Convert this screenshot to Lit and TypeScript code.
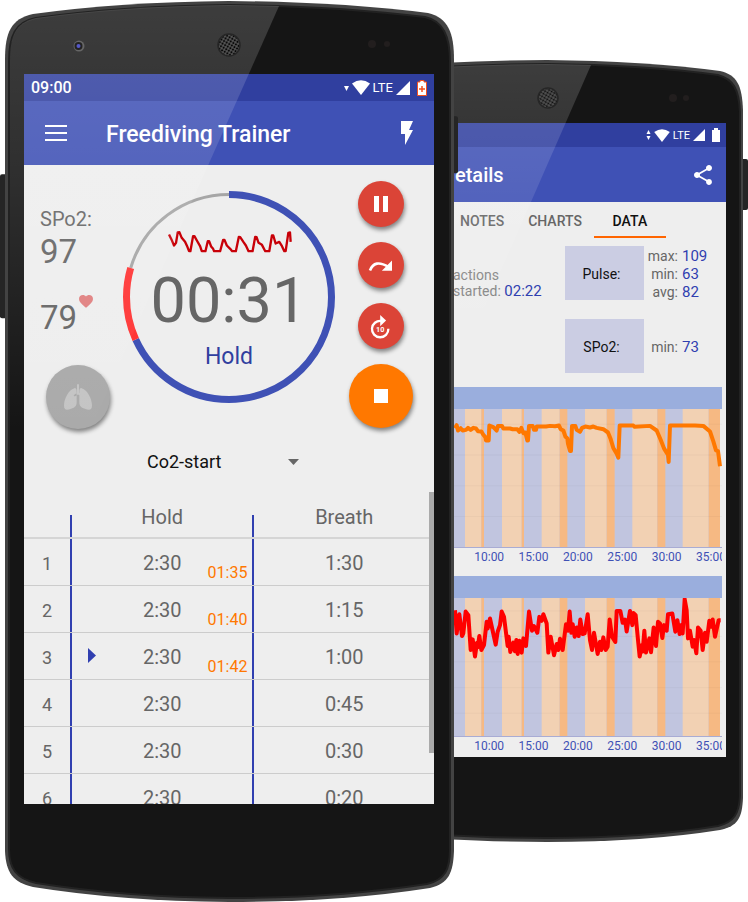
import { LitElement, html, svg, css } from "lit";
import { customElement, state } from "lit/decorators.js";

type Band = [start: number, end: number, kind: "hold" | "over"];

const BANDS: Band[] = [
  [75, 124, "hold"], [124, 132, "over"], [186, 245, "hold"], [245, 252, "over"],
  [305, 359, "hold"], [359, 382, "over"], [435, 500, "hold"], [500, 524, "over"],
  [577, 652, "hold"], [652, 676, "over"], [728, 806, "hold"], [806, 840, "over"],
];

const SPO2_LINE =
  "45,145 50,136 54,152 62,145 68,152 78,150 84,144 92,150 100,144 108,146 114,154 124,155 130,165 136,172 138,182 146,182 148,137 " +
  "160,142 170,152 174,138 186,138 190,146 210,146 218,148 232,148 238,156 244,144 250,160 256,158 262,182 264,182 267,138 278,138 282,150 " +
  "288,150 290,140 318,140 330,138 345,139 357,137 362,148 370,152 376,170 382,176 384,192 390,214 393,214 396,138 406,138 410,150 420,156 " +
  "426,144 436,140 450,143 460,140 470,144 490,148 504,158 512,178 520,205 530,222 535,234 539,137 580,137 584,141 630,138 650,152 " +
  "662,180 672,206 684,226 686,247 690,137 765,137 790,138 810,155 820,185 828,212 834,214 840,260";

const PULSE_LINE =
  "45,120 50,190 58,132 66,198 70,190 77,124 85,135 92,240 98,208 105,260 111,218 113,232 118,198 124,240 132,225 140,155 143,175 " +
  "150,145 158,182 167,224 173,185 180,165 185,124 192,140 203,228 206,200 211,246 220,218 225,244 229,210 233,252 238,212 245,248 " +
  "250,205 258,228 267,124 276,182 282,168 292,188 298,140 305,152 310,132 320,160 325,248 332,200 342,256 350,222 355,240 360,206 " +
  "368,240 378,162 384,182 389,124 394,188 398,162 404,200 410,172 416,198 421,148 428,192 434,190 443,132 450,210 456,240 462,188 " +
  "473,252 480,215 484,240 490,202 497,240 503,230 509,148 516,200 526,216 530,122 541,122 548,158 555,148 560,184 570,122 577,165 " +
  "580,128 587,135 594,210 599,260 606,225 608,245 613,182 618,248 628,205 633,247 641,172 648,228 654,155 660,160 667,204 672,165 " +
  "680,182 684,132 697,130 706,185 712,150 719,192 724,165 728,190 734,86 740,120 744,205 750,182 758,230 762,210 769,250 774,172 " +
  "782,182 788,240 795,188 800,215 808,152 814,170 818,148 825,200 836,150 842,150";

const CHARTS = [
  { name: "SPo2", cls: "spo2", top: 87, grid: [133, 226, 319, 412], line: SPO2_LINE },
  { name: "Pulse", cls: "pulse", top: 83, grid: [122, 199, 276, 354, 431], line: PULSE_LINE },
];

const TIMES = ["10:00", "15:00", "20:00", "25:00", "30:00", "35:00"];

const ROUNDS = [
  { hold: "2:30", mark: "01:35", breath: "1:30" },
  { hold: "2:30", mark: "01:40", breath: "1:15" },
  { hold: "2:30", mark: "01:42", breath: "1:00" },
  { hold: "2:30", mark: "", breath: "0:45" },
  { hold: "2:30", mark: "", breath: "0:30" },
  { hold: "2:30", mark: "", breath: "0:20" },
];

const wifi = html`<svg class="wifi" viewBox="0 0 18 15"><path d="M0 3.4Q9-3 18 3.4L9 15Z" /></svg>`;
const signal = html`<svg class="signal" viewBox="0 0 14 14"><path d="M14 0V14H0Z" /></svg>`;

@customElement("app-root")
export class AppRoot extends LitElement {
  @state() private current = 2;
  @state() private tab = "DATA";

  static styles = css`
    :host {
      display: block;
      background: #fff;
      color: #666;
      font-family: Roboto, sans-serif;
    }
    * { box-sizing: border-box; }
    button {
      border: 0;
      padding: 0;
      background: none;
      color: inherit;
      font: inherit;
      cursor: pointer;
    }
    svg { display: block; flex: none; }

    .stage {
      display: grid;
      grid-template-columns: 454fr 294fr;
      align-items: start;
      overflow: hidden;
    }
    .phone { position: relative; min-width: 0; }
    .front { z-index: 1; padding: 74px 20px 99px 24px; }
    .back { margin: 60px 0 0 -14px; padding: 63px 22px 85px 0; }
    .body, .gloss {
      position: absolute;
      inset: 0;
      width: 100%;
      height: 100%;
      overflow: visible;
    }
    .gloss { pointer-events: none; }
    .screen {
      position: relative;
      background: #eee;
      overflow: hidden;
    }

    .status {
      display: flex;
      align-items: center;
      gap: 3px;
      height: 27px;
      padding: 0 7px;
      background: #303f9f;
      color: #fff;
      fill: #fff;
      font-size: 16px;
      font-weight: 500;
    }
    .clock { margin-right: auto; }
    .network { font-size: 13px; font-weight: 400; }
    .traffic { width: 5px; height: 6px; }
    .wifi { width: 18px; height: 15px; }
    .signal { width: 14px; height: 14px; }
    .battery { width: 10px; height: 16px; margin-left: 4px; }
    .back .status { height: 24px; justify-content: flex-end; padding: 0 6px; }
    .back .network { font-size: 11px; }
    .back .traffic { height: 10px; }
    .back .wifi { width: 16px; height: 13px; }
    .back .signal { width: 12px; height: 12px; }
    .back .battery { width: 8px; height: 14px; }

    .appbar {
      display: flex;
      align-items: center;
      height: 64px;
      padding: 0 20px;
      background: #3f51b5;
      color: #fff;
      fill: #fff;
    }
    .appbar h1 {
      flex: 1;
      margin: 0;
      padding: 2px 0 0 39px;
      font-size: 23px;
      font-weight: 500;
      white-space: nowrap;
    }
    .back .appbar { height: 55px; padding: 0 10px 0 15px; }
    .back .appbar h1 { padding: 0; font-size: 20px; }

    .session {
      display: grid;
      grid-template-columns: 1fr 212px 1fr;
      align-items: start;
      padding: 16px 0 10px;
    }
    .vitals {
      display: flex;
      flex-direction: column;
      align-items: flex-start;
      gap: 28px;
      padding: 26px 0 0 16px;
    }
    .vital { display: flex; flex-wrap: wrap; }
    .vital dt { width: 100%; margin-bottom: 2px; font-size: 20px; line-height: 24px; }
    .vital dd { margin: 0; font-size: 33px; line-height: 38px; }
    dl { margin: 0; }
    .heart { width: 14px; height: 13px; margin: -4px 0 0 2px; }
    .round {
      display: grid;
      place-items: center;
      width: 46px;
      height: 46px;
      border-radius: 50%;
      background: #db4437;
      fill: #fff;
      box-shadow: 1px 3px 4px rgba(0, 0, 0, 0.45);
    }
    .large { width: 64px; height: 64px; }
    .stop { background: #ff7800; }
    .lungs { margin-left: 6px; background: #aaa; fill: #c4c4c4; }
    .controls {
      display: flex;
      flex-direction: column;
      align-items: center;
      gap: 15px;
      padding-right: 8px;
    }
    .dial {
      position: relative;
      display: flex;
      flex-direction: column;
      align-items: center;
      height: 212px;
      margin-top: 10px;
      padding-top: 37px;
    }
    .ring { position: absolute; inset: 0; fill: none; }
    .wave { width: 127px; height: 27px; fill: none; stroke: #c80008; stroke-width: 7; stroke-linejoin: round; }
    .timer { margin-top: 14px; font-size: 63px; line-height: 64px; }
    .phase { margin-top: 10px; color: #303f9f; font-size: 23px; line-height: 28px; }

    .picker {
      display: flex;
      align-items: center;
      justify-content: center;
      height: 46px;
      padding-right: 12px;
    }
    .program {
      appearance: none;
      width: 141px;
      padding: 0;
      border: 0;
      background: none;
      color: #111;
      font: 18px/24px Roboto, sans-serif;
    }
    .caret { width: 11px; height: 6px; fill: #666; }

    .rounds { position: relative; height: 312px; margin-top: 7px; overflow: hidden; }
    .thumb {
      position: absolute;
      top: 0;
      right: 0;
      width: 5px;
      height: 261px;
      background: #aaa;
    }
    .plan {
      width: 100%;
      table-layout: fixed;
      border-spacing: 0;
      font-size: 20px;
      text-align: center;
    }
    .plan th, .plan td {
      position: relative;
      height: 47px;
      padding: 2px 0 0;
      border-bottom: 1px solid #ccc;
      font-weight: 400;
    }
    .plan thead th { padding-top: 4px; border-bottom: 2px solid #d5d5d5; }
    .plan .index { width: 48px; font-size: 18px; }
    .plan .held { width: 44.5%; }
    .plan .ruled {
      padding-right: 2px;
      background: linear-gradient(#303fb0, #303fb0) right bottom / 2px 100% no-repeat;
    }
    .plan thead .ruled { background-size: 2px 22px; }
    .mark { position: absolute; right: 7px; bottom: 2px; color: #ff7800; font-size: 16px; line-height: 20px; }
    .pointer { position: absolute; left: 16px; top: 15px; width: 8px; height: 15px; fill: #303fb0; }

    .tabs { display: flex; height: 36px; padding-left: 8px; font-size: 14px; font-weight: 500; }
    .tab { padding: 4px 12px 0; border-bottom: 2px solid transparent; }
    .tab[aria-selected="true"] { width: 72px; border-color: #ff6500; color: #111; }

    .summary {
      display: grid;
      grid-template-columns: 1fr 79px 82px;
      gap: 19px 0;
      padding: 8px 0 14px;
      font-size: 14px;
      line-height: 18px;
    }
    .summary > * { display: grid; align-content: center; height: 54px; }
    .note { padding: 20px 0 0 13px; color: #888; line-height: 16px; white-space: nowrap; }
    .metric { justify-content: center; padding: 2px 6px 0 0; background: #cbcde3; color: #111; }
    .values { grid-template-columns: 34px 1fr; column-gap: 4px; padding-top: 2px; text-align: right; }
    .values dd { margin: 0; text-align: left; }
    .value { color: #303fb0; font-size: 15px; }

    .chart { margin: 0 4px 10px 0; overflow: hidden; }
    .chart:last-child { margin-bottom: 2px; }
    .strip { height: 22px; background: #9aaedd; }
    .plot { width: 100%; height: 139px; border-bottom: 1px solid #a9acd4; }
    .calm { fill: #c1c5df; }
    .hold { fill: #f2d1b3; }
    .over { fill: #f6b983; }
    .grid { stroke: #000; stroke-opacity: 0.03; vector-effect: non-scaling-stroke; }
    .trace { fill: none; stroke-width: 4; stroke-linejoin: round; vector-effect: non-scaling-stroke; }
    .trace.spo2 { stroke: #ff7800; }
    .trace.pulse { stroke: #f00; }
    .times {
      display: flex;
      height: 18px;
      padding-left: 27px;
      color: #3f51b5;
      font-size: 12px;
      line-height: 18px;
      text-align: center;
    }
    .time { flex: 0 0 17.4%; }
  `;

  private arc(from: number, to: number, color: string, width: number) {
    return svg`<circle cx="106" cy="106" r="102.5" pathLength="360" transform="rotate(-90 106 106)"
      stroke=${color} stroke-width=${width} stroke-dasharray="0 ${from} ${to - from} 360" />`;
  }

  private speaker(cx: number, cy: number, r: number, id: string) {
    return svg`
      <pattern id=${id} width="3" height="3" patternUnits="userSpaceOnUse" patternTransform="rotate(30)">
        <rect width="3" height="3" fill="#555" /><circle cx="1.5" cy="1.5" r="1.1" fill="#080808" />
      </pattern>
      <circle cx=${cx} cy=${cy} r=${r} fill="url(#${id})" stroke="#262626" stroke-width="1.5" />`;
  }

  private frontBody() {
    const shape =
      "M5 60C5 32 11 19 33 14Q120 2 229 1Q340 2 428 13C448 18 454 32 454 60V850C453 872 449 882 430 887Q340 901 229 901Q120 900 33 886C13 881 6 872 5 850Z";
    const inner =
      "M9 62C9 36 15 22 36 18Q124 6 229 5Q336 6 425 17C443 21 450 36 450 62V848C450 868 445 879 427 883Q336 897 229 897Q124 896 36 882C17 878 9 868 9 848Z";
    return html`<svg class="body" viewBox="0 0 454 902" preserveAspectRatio="none" aria-hidden="true">
      <rect x="0" y="174" width="8" height="144" rx="2" fill="#252525" />
      <rect x="450" y="116" width="8" height="57" rx="2" fill="#252525" />
      <path d=${shape} fill="#434343" />
      <path d=${inner} fill="#151515" stroke="#222" stroke-width="2" />
    </svg>`;
  }

  private frontGloss() {
    return html`<svg class="gloss" viewBox="0 0 454 902" preserveAspectRatio="none" aria-hidden="true">
      <defs>
        <linearGradient id="front-sheen" x1="0" y1="0" x2="0" y2="1">
          <stop offset="0" stop-color="#fff" stop-opacity=".17" />
          <stop offset=".4" stop-color="#fff" stop-opacity=".11" />
          <stop offset="1" stop-color="#fff" stop-opacity="0" />
        </linearGradient>
      </defs>
      <path d="M10 62C10 36 15 23 36 18Q124 6 229 5L279 6L90 430H10Z" fill="url(#front-sheen)" />
      ${this.speaker(229, 45, 11, "front-mesh")}
      <circle cx="79" cy="46" r="5.500" fill="#666" />
      <circle cx="78.500" cy="46" r="4" fill="#222" />
      <circle cx="78.500" cy="46" r="2" fill="#5558c8" />
      <circle cx="372" cy="44" r="4" fill="#221e1e" />
      <circle cx="387" cy="44" r="3" fill="#221e1e" />
    </svg>`;
  }

  private backBody() {
    return html`<svg class="body" viewBox="0 0 308 782" preserveAspectRatio="none" aria-hidden="true">
      <rect x="298" y="99" width="10" height="51" rx="2" fill="#252525" />
      <path d="M0 3Q60 0 107 0Q205 1 280 11C297 15 302 25 303 50V738C302 758 298 766 280 770Q205 782 107 782Q60 782 0 779Z" fill="#434343" />
      <path d="M0 7Q60 4 107 4Q205 5 278 15C293 19 299 29 300 52V736C299 754 294 762 278 766Q205 778 107 778Q60 778 0 775Z" fill="#151515" stroke="#222" stroke-width="2" />
    </svg>`;
  }

  private backGloss() {
    return html`<svg class="gloss" viewBox="0 0 308 782" preserveAspectRatio="none" aria-hidden="true">
      <defs>
        <linearGradient id="back-sheen" x1="0" y1="0" x2="0" y2="1">
          <stop offset="0" stop-color="#fff" stop-opacity=".17" />
          <stop offset=".5" stop-color="#fff" stop-opacity=".1" />
          <stop offset="1" stop-color="#fff" stop-opacity="0" />
        </linearGradient>
      </defs>
      <path d="M0 7Q60 4 107 4L151 5L26 290H0Z" fill="url(#back-sheen)" />
      ${this.speaker(108, 38, 10, "back-mesh")}
      <circle cx="233" cy="38" r="4" fill="#221e1e" />
      <circle cx="246" cy="38" r="3" fill="#221e1e" />
    </svg>`;
  }

  private renderSession() {
    return html`<section class="session">
      <div class="vitals">
        <dl class="vital"><dt>SPo2:</dt><dd>97</dd></dl>
        <dl class="vital">
          <dd>79</dd>
          <svg class="heart" viewBox="2 3 20 18.500" role="img" aria-label="Pulse"><path fill="#e08080" d="M12 21.350l-1.450-1.320C5.400 15.360 2 12.280 2 8.500 2 5.420 4.420 3 7.500 3c1.740 0 3.410.81 4.500 2.090C13.090 3.810 14.760 3 16.500 3 19.580 3 22 5.420 22 8.500c0 3.780-3.400 6.860-8.550 11.540L12 21.350z" /></svg>
        </dl>
        <button class="round large lungs" aria-label="Breathe">
          <svg width="28" height="26" viewBox="132 643 84 77">
            <path d="M171 643h6v26l10 7-3 4-10-6-10 6-3-4 10-7zM163 655c-18 6-31 32-31 52 0 15 9 15 21 10 13-5 17-9 17-20v-32c0-7-2-11-7-10zM185 655c18 6 31 32 31 52 0 15-9 15-21 10-13-5-17-9-17-20v-32c0-7 2-11 7-10z" />
          </svg>
        </button>
      </div>
      <div class="dial">
        <svg class="ring" width="212" height="212" viewBox="0 0 212 212" aria-hidden="true">
          ${this.arc(286.5, 360, "#a6a6a6", 3)}
          ${this.arc(0, 245.5, "#3f51b5", 7)}
          ${this.arc(245.5, 286.5, "#ff3535", 7)}
        </svg>
        <svg class="wave" viewBox="438 174 380 80" aria-hidden="true">
          <path d="M447 193L454 207 462 226 468 218 473 187 478 186 485 203 495 215 502 230 507 243H511L519 198 523 198 532 214 540 228 545 243H556L563 213 567 213 573 229 579 236 582 243H600L609 209 613 209 620 226 630 236 636 243H647L656 200 660 201 670 216 677 226 685 243H697L705 200 709 201 715 218 725 224 735 243H747L755 196 759 196 766 220 777 215 785 228 792 243H796L804 188 809 187 811 215" />
        </svg>
        <div class="timer" role="timer">00:31</div>
        <div class="phase">Hold</div>
      </div>
      <div class="controls">
        <button class="round" aria-label="Pause">
          <svg width="16" height="16" viewBox="0 0 16 16"><path d="M1 0h5v16H1zM10 0h5v16h-5z" /></svg>
        </button>
        <button class="round" aria-label="Skip">
          <svg width="25" height="13" viewBox="444 264 76 38"><path d="M450 298Q464 262 506 287" fill="none" stroke="#fff" stroke-width="8" /><path d="M517 268V299H486Z" /></svg>
        </button>
        <button class="round" aria-label="Forward 10 seconds">
          <svg width="21" height="25" viewBox="450 430 64 74">
            <path d="M484 450A25 25 0 1 0 506 474" fill="none" stroke="#fff" stroke-width="7" /><path d="M481 432L499 449 481 466Z" />
            <text x="481" y="483" text-anchor="middle" font-size="22" font-weight="700">10</text>
          </svg>
        </button>
        <button class="round large stop" aria-label="Stop">
          <svg width="14" height="14" viewBox="0 0 14 14"><path d="M0 0h14v14H0z" /></svg>
        </button>
      </div>
    </section>`;
  }

  private renderPlan() {
    return html`<div class="rounds">
      <table class="plan">
        <thead>
          <tr><th class="index ruled" aria-label="Round"></th><th class="held ruled" scope="col">Hold</th><th scope="col">Breath</th></tr>
        </thead>
        <tbody>
          ${ROUNDS.map(
            (r, i) => html`<tr @click=${() => (this.current = i)}>
              <th class="index ruled" scope="row">${i + 1}</th>
              <td class="ruled">
                ${i === this.current
                  ? html`<svg class="pointer" viewBox="0 0 8 15"><path d="M0 0L8 7.500 0 15Z" /></svg>`
                  : ""}
                ${r.hold}${r.mark ? html`<span class="mark">${r.mark}</span>` : ""}
              </td>
              <td>${r.breath}</td>
            </tr>`
          )}
        </tbody>
      </table>
      <div class="thumb"></div>
    </div>`;
  }

  private renderChart(c: (typeof CHARTS)[number]) {
    return html`<div class="chart">
      <div class="strip"></div>
      <svg class="plot" viewBox="0 ${c.top} 846 417" preserveAspectRatio="none" role="img" aria-label=${c.name}>
        <rect class="calm" x="0" y=${c.top} width="840" height="417" />
        ${BANDS.map(([a, b, kind]) => svg`<rect class=${kind} x=${a} y=${c.top} width=${b - a} height="417" />`)}
        ${c.grid.map((y) => svg`<path class="grid" d="M0 ${y}H846" />`)}
        <polyline class="trace ${c.cls}" points=${c.line} />
      </svg>
      <div class="times">${TIMES.map((t) => html`<span class="time">${t}</span>`)}</div>
    </div>`;
  }

  render() {
    return html`<main class="stage">
      <article class="phone front">
        ${this.frontBody()}
        <div class="screen">
          <div class="status">
            <span class="clock">09:00</span>
            <svg class="traffic" viewBox="0 0 5 6"><path d="M0 1H5L2.500 6Z" /></svg>
            ${wifi}<span class="network">LTE</span>${signal}
            <svg class="battery" viewBox="0 0 10 16">
              <path d="M3 .5H7V2H9.500V15.500H.5V2H3Z" stroke="#f4511e" /><path d="M5 6v6M2 9h6" stroke="#f4511e" stroke-width="1.500" />
            </svg>
          </div>
          <header class="appbar">
            <button aria-label="Menu"><svg width="23" height="16" viewBox="0 0 23 16"><path d="M1 0H23V2H1zM1 7H23V9H1zM1 14H23V16H1z" /></svg></button>
            <h1>Freediving Trainer</h1>
            <button aria-label="Flash"><svg width="14" height="24" viewBox="0 0 14 24"><path d="M1 0H13L9 9H13L5 24V13H1Z" /></svg></button>
          </header>
          ${this.renderSession()}
          <div class="picker">
            <select class="program" aria-label="Program"><option>Co2-start</option></select>
            <svg class="caret" viewBox="0 0 11 6"><path d="M0 0H11L5.500 6Z" /></svg>
          </div>
          ${this.renderPlan()}
        </div>
        ${this.frontGloss()}
      </article>

      <article class="phone back">
        ${this.backBody()}
        <div class="screen">
          <div class="status">
            <svg class="traffic" viewBox="0 0 5 10"><path d="M.5 4L2.500 0 4.500 4ZM.5 6H4.500L2.500 10Z" /></svg>
            ${wifi}<span class="network">LTE</span>${signal}
            <svg class="battery" viewBox="0 0 8 14"><path d="M2 0H6V2H8V14H0V2H2Z" /></svg>
          </div>
          <header class="appbar">
            <h1>etails</h1>
            <button aria-label="Share"><svg width="26" height="24" viewBox="0 0 24 24"><path d="M18 16.080c-.76 0-1.440.3-1.960.77L8.910 12.700c.05-.23.09-.46.09-.7s-.04-.47-.09-.7l7.050-4.110c.54.5 1.250.81 2.040.81 1.660 0 3-1.340 3-3s-1.340-3-3-3-3 1.340-3 3c0 .24.04.47.09.7L8.040 9.810C7.500 9.310 6.790 9 6 9c-1.660 0-3 1.340-3 3s1.340 3 3 3c.79 0 1.500-.31 2.040-.81l7.120 4.160c-.05.21-.08.43-.08.65 0 1.610 1.310 2.920 2.920 2.920s2.920-1.310 2.920-2.920-1.310-2.920-2.920-2.920z" /></svg></button>
          </header>
          <nav class="tabs" role="tablist">
            ${["NOTES", "CHARTS", "DATA"].map(
              (t) => html`<button class="tab" role="tab" aria-selected=${this.tab === t} @click=${() => (this.tab = t)}>${t}</button>`
            )}
          </nav>
          <section class="summary">
            <div class="note"><span>actions</span><span>started: <span class="value">02:22</span></span></div>
            <div class="metric">Pulse:</div>
            <dl class="values">
              <dt>max:</dt><dd class="value">109</dd>
              <dt>min:</dt><dd class="value">63</dd>
              <dt>avg:</dt><dd class="value">82</dd>
            </dl>
            <div></div>
            <div class="metric">SPo2:</div>
            <dl class="values"><dt>min:</dt><dd class="value">73</dd></dl>
          </section>
          <section>${CHARTS.map((c) => this.renderChart(c))}</section>
        </div>
        ${this.backGloss()}
      </article>
    </main>`;
  }
}
